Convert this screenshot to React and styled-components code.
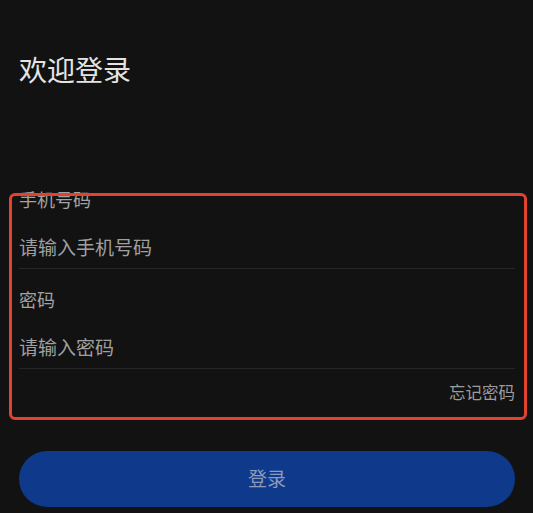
import React, { useState } from 'react';
import styled, { createGlobalStyle } from 'styled-components';

const GlobalStyle = createGlobalStyle`
  html, body {
    margin: 0;
    padding: 0;
    background: #121212;
  }
  body {
    font-family: "Noto Sans CJK SC", "Noto Sans", sans-serif;
  }
`;

const Page = styled.div`
  min-height: 513px;
  padding: 49px 18px 0 19px;
  box-sizing: border-box;
  background: #121212;
`;

const Title = styled.h1`
  margin: 0;
  font-size: 28px;
  line-height: 40px;
  font-weight: 400;
  color: #e4e4e4;
`;

const Form = styled.div`
  position: relative;
  margin-top: 98px;
  display: flex;
  flex-direction: column;
`;

const Highlight = styled.div`
  position: absolute;
  top: 6px;
  left: -10px;
  right: -12px;
  bottom: -17px;
  border: 3px solid #e2432e;
  border-radius: 6px;
  pointer-events: none;
`;

const Label = styled.div`
  font-size: 18px;
  line-height: 24px;
  color: #a3a3a3;
  margin-top: ${p => p.$gap || 0}px;
`;

const Input = styled.input`
  display: block;
  width: 100%;
  box-sizing: border-box;
  padding: 23px 0 10px;
  border: 0;
  border-bottom: 1px solid #262626;
  background: transparent;
  outline: none;
  font-family: inherit;
  font-size: 19px;
  line-height: 24px;
  height: 58px;
  color: #e4e4e4;

  &::placeholder {
    color: #a0a0a0;
  }
`;

const Forgot = styled.a`
  align-self: flex-end;
  margin-top: 12px;
  font-size: 16.5px;
  line-height: 22px;
  color: #9c9c9c;
  cursor: pointer;
`;

const Submit = styled.button`
  display: block;
  width: 100%;
  height: 56px;
  margin-top: 48px;
  padding: 0 0 3px;
  border: 0;
  border-radius: 28px;
  background: #0f398b;
  color: #8c9abb;
  font-family: inherit;
  font-size: 19px;
  cursor: pointer;
`;

export default function App() {
  const [phone, setPhone] = useState('');
  const [password, setPassword] = useState('');

  return (
    <Page>
      <GlobalStyle />
      <Title>欢迎登录</Title>
      <Form>
        <Label>手机号码</Label>
        <Input
          placeholder="请输入手机号码"
          value={phone}
          onChange={e => setPhone(e.target.value)}
        />
        <Label $gap={18}>密码</Label>
        <Input
          type="password"
          placeholder="请输入密码"
          value={password}
          onChange={e => setPassword(e.target.value)}
        />
        <Forgot>忘记密码</Forgot>
        <Highlight />
      </Form>
      <Submit disabled={!phone || !password}>登录</Submit>
    </Page>
  );
}
